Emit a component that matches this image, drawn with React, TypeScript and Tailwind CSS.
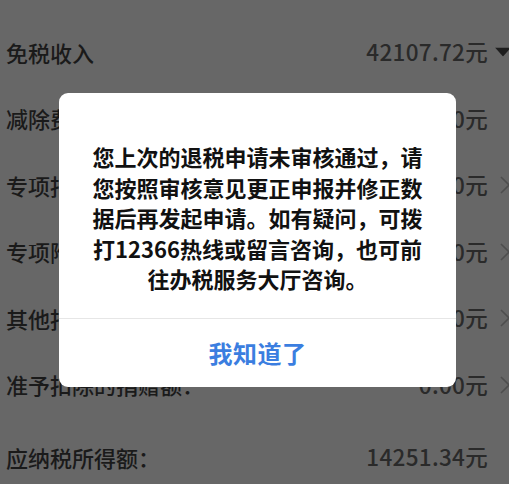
import React from "react";

type Row = { label: string; value: string; trail: "tri" | "chev" | "none" };

const rows: Row[] = [
  { label: "免税收入", value: "42107.72元", trail: "tri" },
  { label: "减除费用", value: "60000.00元", trail: "none" },
  { label: "专项扣除", value: "11250.00元", trail: "chev" },
  { label: "专项附加扣除", value: "24000.00元", trail: "chev" },
  { label: "其他扣除", value: "0.00元", trail: "chev" },
  { label: "准予扣除的捐赠额：", value: "0.00元", trail: "chev" },
];

function Trail({ kind }: { kind: Row["trail"] }) {
  return (
    <div className="w-[24px] shrink-0 h-full relative">
      {kind === "tri" && (
        <svg className="absolute left-[7px] top-1/2 -translate-y-1/2" width="16" height="9" viewBox="0 0 16 9">
          <path d="M0 0 L16 0 L8 9 Z" fill="#1e1e1e" />
        </svg>
      )}
      {kind === "chev" && (
        <svg className="absolute left-[12px] top-1/2 -translate-y-1/2" width="10" height="18" viewBox="0 0 10 18">
          <path d="M1 1 L9 9 L1 17" stroke="#4e4e4e" strokeWidth="1.6" fill="none" />
        </svg>
      )}
    </div>
  );
}

function RowView({ r, extra }: { r: Row; extra?: string }) {
  return (
    <div className={"flex items-center justify-between h-[66.5px] pl-[6px] " + (extra ?? "")}>
      <span className="text-[22px] font-medium text-[#1a1a1a] whitespace-nowrap">{r.label}</span>
      <div className="flex items-center h-full">
        <span className="text-[22.5px] font-medium text-[#2a2a2a] whitespace-nowrap tracking-[0.3px]">{r.value}</span>
        <Trail kind={r.trail} />
      </div>
    </div>
  );
}

export default function App() {
  return (
    <div
      className="relative w-[509px] h-[484px] overflow-hidden bg-[#676767]"
      style={{ fontFamily: '"Noto Sans CJK SC", "Noto Sans", sans-serif' }}
    >
      <div className="pt-[19px] w-[512px]">
        {rows.map((r) => (
          <RowView key={r.label} r={r} />
        ))}
        <RowView r={{ label: "应纳税所得额：", value: "14251.34元", trail: "none" }} extra="mt-[6px]" />
      </div>

      <div className="absolute left-[59px] top-[93px] w-[397px] h-[294px] bg-white rounded-[9px] flex flex-col overflow-hidden">
        <div className="h-[225px] pt-[48px] flex flex-col items-center text-[22px] leading-[30.5px] font-semibold text-[#111] whitespace-nowrap">
          <div>您上次的退税申请未审核通过，请</div>
          <div>您按照审核意见更正申报并修正数</div>
          <div>据后再发起申请。如有疑问，可拨</div>
          <div>打12366热线或留言咨询，也可前</div>
          <div>往办税服务大厅咨询。</div>
        </div>
        <div className="h-px bg-[#e6e6e6]" />
        <div className="flex-1 flex items-center justify-center">
          <span className="text-[24px] font-semibold text-[#3b7ee0] tracking-[0.5px]">我知道了</span>
        </div>
      </div>
    </div>
  );
}
